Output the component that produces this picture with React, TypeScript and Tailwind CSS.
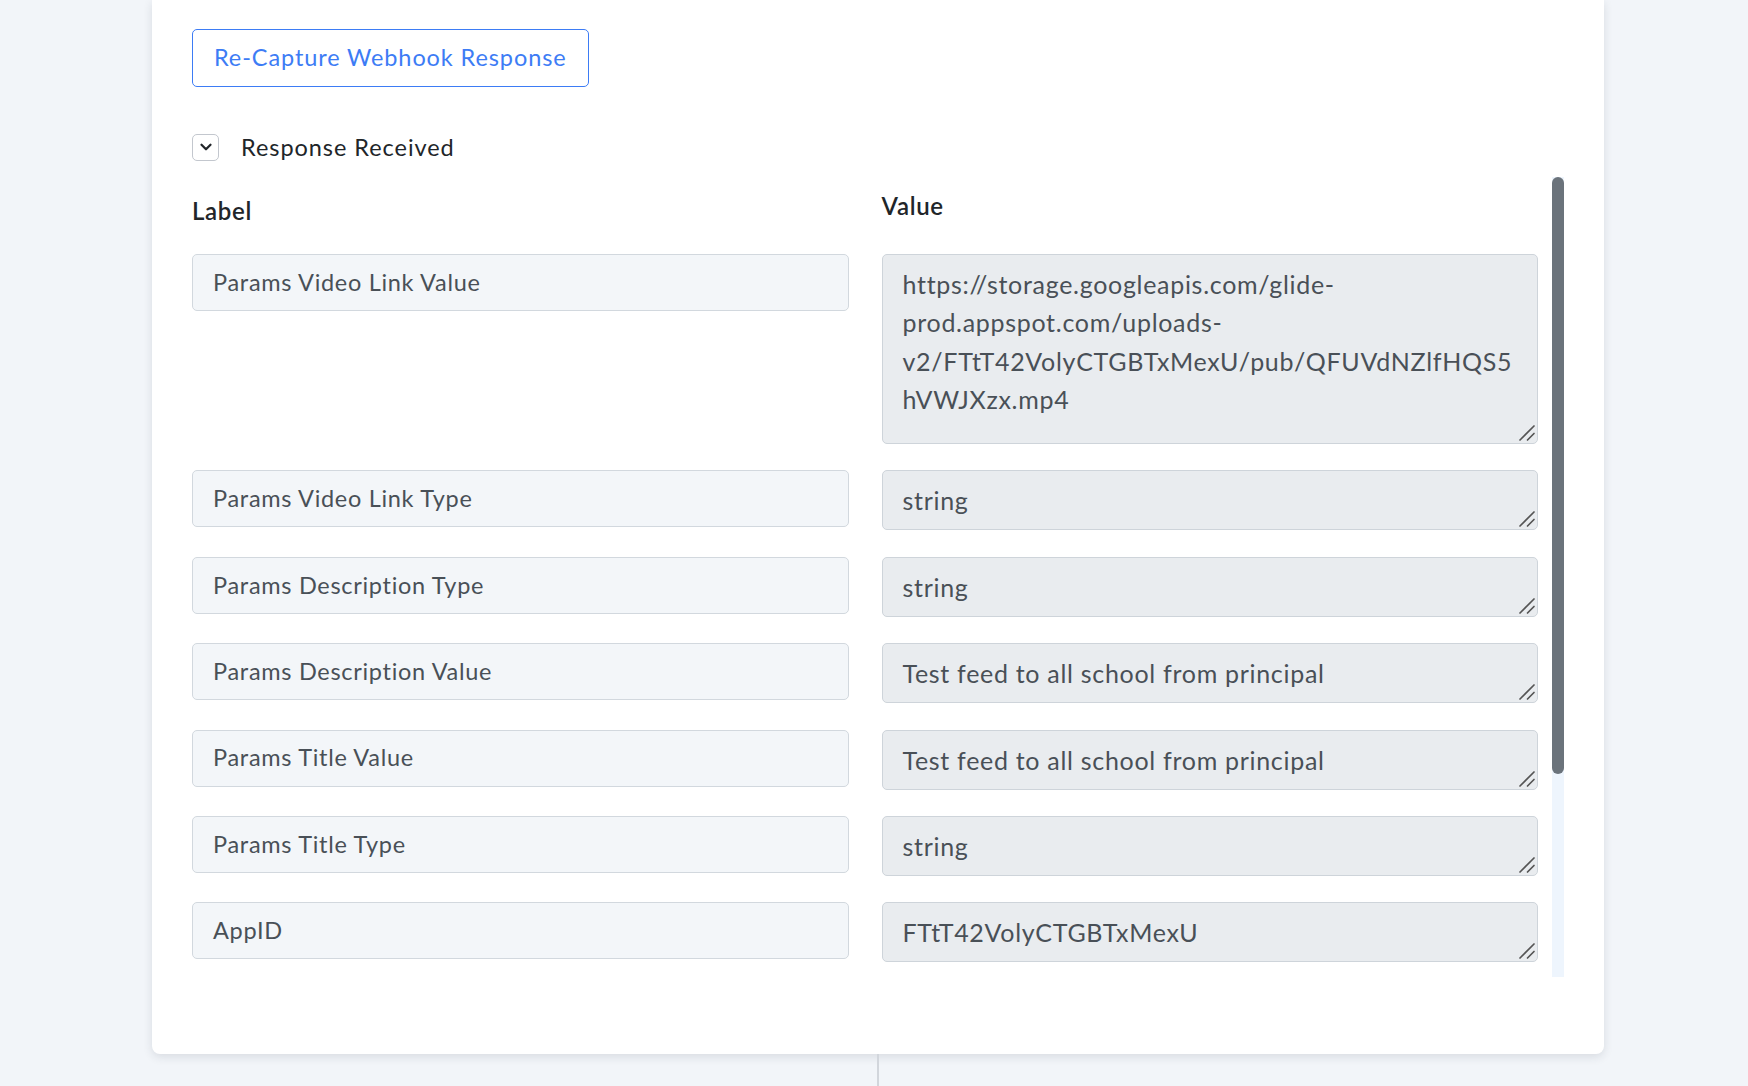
import { ChevronDown } from "lucide-react";

interface Field {
  label: string;
  value: string;
  tall?: boolean;
}

const fields: Field[] = [
  {
    label: "Params Video Link Value",
    value:
      "https://storage.googleapis.com/glide-\nprod.appspot.com/uploads-\nv2/FTtT42VolyCTGBTxMexU/pub/QFUVdNZlfHQS5\nhVWJXzx.mp4",
    tall: true,
  },
  { label: "Params Video Link Type", value: "string" },
  { label: "Params Description Type", value: "string" },
  { label: "Params Description Value", value: "Test feed to all school from principal" },
  { label: "Params Title Value", value: "Test feed to all school from principal" },
  { label: "Params Title Type", value: "string" },
  { label: "AppID", value: "FTtT42VolyCTGBTxMexU" },
];

// little "//" drag grip in the textarea corner
function Grip() {
  return (
    <svg
      className="pointer-events-none absolute bottom-[2px] right-[2px] h-[18px] w-[18px] text-[#555]"
      viewBox="0 0 18 18"
      fill="none"
      stroke="currentColor"
      strokeWidth={1.7}
      strokeLinecap="round"
    >
      <path d="M2 16 L16 2" />
      <path d="M9.5 16 L16 9.5" />
    </svg>
  );
}

export default function App() {
  return (
    <div className="min-h-screen bg-[#f2f5f9] font-['Lato',sans-serif] tracking-[0.7px]">
      <div className="ml-[152px] w-[1452px] rounded-b-lg bg-white px-10 pb-[77px] pt-[29px] shadow-[0_3px_10px_rgba(30,40,60,0.12)]">
        {/* Capture action */}
        <button className="flex h-[58px] items-center rounded-[5px] border border-[#3d7cf5] px-[21px] text-[23.5px] tracking-[0.9px] text-[#3d7cf5]">
          Re-Capture Webhook Response
        </button>

        {/* Collapsible header */}
        <div className="mt-[46px] flex h-[28px] items-center gap-[22px]">
          <span className="flex h-[27px] w-[27px] items-center justify-center rounded-[5px] border border-[#c3c7ce]">
            <ChevronDown className="h-[18px] w-[18px] text-[#212529]" strokeWidth={3} />
          </span>
          <span className="text-[23.5px] leading-[28px] tracking-[0.95px] text-[#212529]">
            Response Received
          </span>
        </div>

        {/* Response fields with their scroll track */}
        <div className="mt-4 flex h-[800px] gap-[14px]">
          <div className="flex-1 overflow-hidden">
            <div className="grid grid-cols-2 gap-x-[33px] gap-y-[26.4px]">
              <div className="-mb-[26.4px] h-[77px] pt-[19px] text-[24px] font-semibold leading-[30px] text-[#212529]">
                Label
              </div>
              <div className="-mb-[26.4px] h-[77px] pt-[14px] text-[24px] font-semibold leading-[30px] text-[#212529]">
                Value
              </div>
              {fields.map((f) => (
                <div key={f.label} className="contents">
                  <div className="flex h-[57px] items-center rounded-[5px] border border-[#d2d8de] bg-[#f3f6f9] px-5 text-[23.5px] text-[#495057]">
                    {f.label}
                  </div>
                  <div className="relative">
                    <textarea
                      readOnly
                      wrap="off"
                      value={f.value}
                      className={`block w-full resize-none overflow-hidden rounded-[5px] border border-[#ced4da] bg-[#e9ecef] px-5 py-[10px] text-[25px] leading-[38.3px] text-[#495057] outline-none ${
                        f.tall ? "h-[190px]" : "h-[60px]"
                      }`}
                    />
                    <Grip />
                  </div>
                </div>
              ))}
            </div>
          </div>
          <div className="w-3 bg-[#eef5fd]">
            <div className="h-[597px] rounded-full bg-[#6b737b]" />
          </div>
        </div>
      </div>

      {/* Connector to next step */}
      <div className="ml-[877px] h-[40px] w-[2px] bg-[#d2d6dc]" />
    </div>
  );
}
